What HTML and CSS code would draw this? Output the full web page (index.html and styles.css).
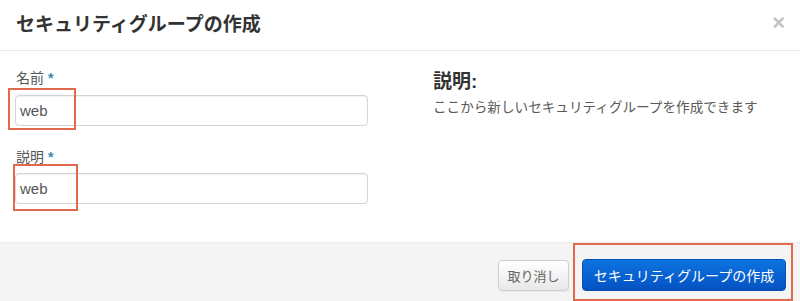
FILE: index.html
```html
<!DOCTYPE html>
<html lang="ja">
<head>
<meta charset="utf-8">
<link rel="stylesheet" href="styles.css">
</head>
<body>
<div class="modal">
  <div class="modal-header">
    <h3 class="modal-title">セキュリティグループの作成</h3>
    <span class="close">&times;</span>
  </div>
  <div class="modal-body">
    <div class="left">
      <div class="form-group">
        <label class="label">名前 <span class="req">*</span></label>
        <div class="input-wrap">
          <div class="input">web</div>
          <span class="mark mark-1"></span>
        </div>
      </div>
      <div class="form-group second">
        <label class="label">説明 <span class="req">*</span></label>
        <div class="input-wrap">
          <div class="input">web</div>
          <span class="mark mark-2"></span>
        </div>
      </div>
    </div>
    <div class="right">
      <h3 class="help-title">説明:</h3>
      <p class="help-text">ここから新しいセキュリティグループを作成できます</p>
    </div>
  </div>
  <div class="modal-footer">
    <button class="btn btn-cancel">取り消し</button>
    <div class="primary-wrap">
      <button class="btn btn-primary">セキュリティグループの作成</button>
      <span class="mark mark-3"></span>
    </div>
  </div>
</div>
</body>
</html>
```
FILE: styles.css
```css
html, body {
  margin: 0;
  padding: 0;
  background: #fff;
}
body {
  font-family: "Liberation Sans", "Noto Sans CJK JP", sans-serif;
  color: #333;
  width: 800px;
  height: 301px;
  overflow: hidden;
}
.modal {
  display: flex;
  flex-direction: column;
  height: 301px;
}
.modal-header {
  height: 50px;
  border-bottom: 1px solid #eaeaea;
  display: flex;
  align-items: center;
  justify-content: space-between;
  padding: 0 15px 0 16px;
  box-sizing: content-box;
}
.modal-title {
  margin: 0;
  font-size: 19px;
  font-weight: bold;
  color: #333;
  line-height: 24px;
}
.close {
  font-size: 22px;
  font-weight: bold;
  color: #c4c4c4;
  line-height: 20px;
  margin-top: -4px;
}
.modal-body {
  height: 191px;
  box-sizing: border-box;
  padding: 17px 15px 0 15px;
  display: flex;
}
.left {
  width: 353px;
  flex: none;
}
.right {
  margin-left: 65px;
}
.form-group.second {
  margin-top: 21px;
}
.label {
  display: block;
  font-size: 14px;
  line-height: 20px;
  color: #555;
  padding-left: 1px;
  margin-bottom: 7px;
}
.second .label {
  margin-bottom: 6px;
}
.req {
  color: #3a87ad;
  font-weight: bold;
  font-family: "Liberation Sans", sans-serif;
}
.input-wrap {
  position: relative;
}
.input {
  height: 31px;
  box-sizing: border-box;
  border: 1px solid #d4d4d4;
  border-radius: 4px;
  box-shadow: inset 0 1px 1px rgba(0,0,0,0.06);
  padding: 0 4px;
  font-size: 15px;
  line-height: 29px;
  color: #555;
  background: #fff;
}
.mark {
  position: absolute;
  border: 2px solid #e06a4c;
  box-sizing: border-box;
  pointer-events: none;
}
.mark-1 {
  left: -7px;
  top: -7px;
  width: 68px;
  height: 42px;
}
.mark-2 {
  left: -2px;
  top: -9px;
  width: 65px;
  height: 47px;
}
.help-title {
  margin: 2px 0 0 0;
  font-size: 19px;
  line-height: 24px;
  font-weight: bold;
  color: #333;
}
.help-text {
  margin: 5px 0 0 0;
  font-size: 13.6px;
  line-height: 18px;
  color: #5a5a5a;
}
.modal-footer {
  flex: 1;
  background: #f4f4f4;
  border-top: 1px solid #ececec;
  display: flex;
  justify-content: flex-end;
  align-items: flex-start;
  padding: 16px 14px 0 0;
}
.btn {
  font-family: "Liberation Sans", "Noto Sans CJK JP", sans-serif;
  border-radius: 4px;
  cursor: pointer;
  box-sizing: border-box;
  padding: 0;
}
.btn-cancel {
  width: 71px;
  height: 31px;
  margin-top: 1px;
  font-size: 13px;
  color: #666;
  border: 1px solid #cfcfcf;
  background: linear-gradient(#ffffff, #e8e8e8);
  box-shadow: 0 1px 1px rgba(0,0,0,0.05);
}
.primary-wrap {
  position: relative;
  margin-left: 13px;
}
.btn-primary {
  width: 204px;
  height: 32px;
  font-size: 14px;
  color: #fff;
  border: 1px solid #0550b5;
  background: linear-gradient(#0d74e0, #0452c2);
  display: block;
}
.mark-3 {
  left: -9px;
  top: -16px;
  width: 220px;
  height: 58px;
}
```
